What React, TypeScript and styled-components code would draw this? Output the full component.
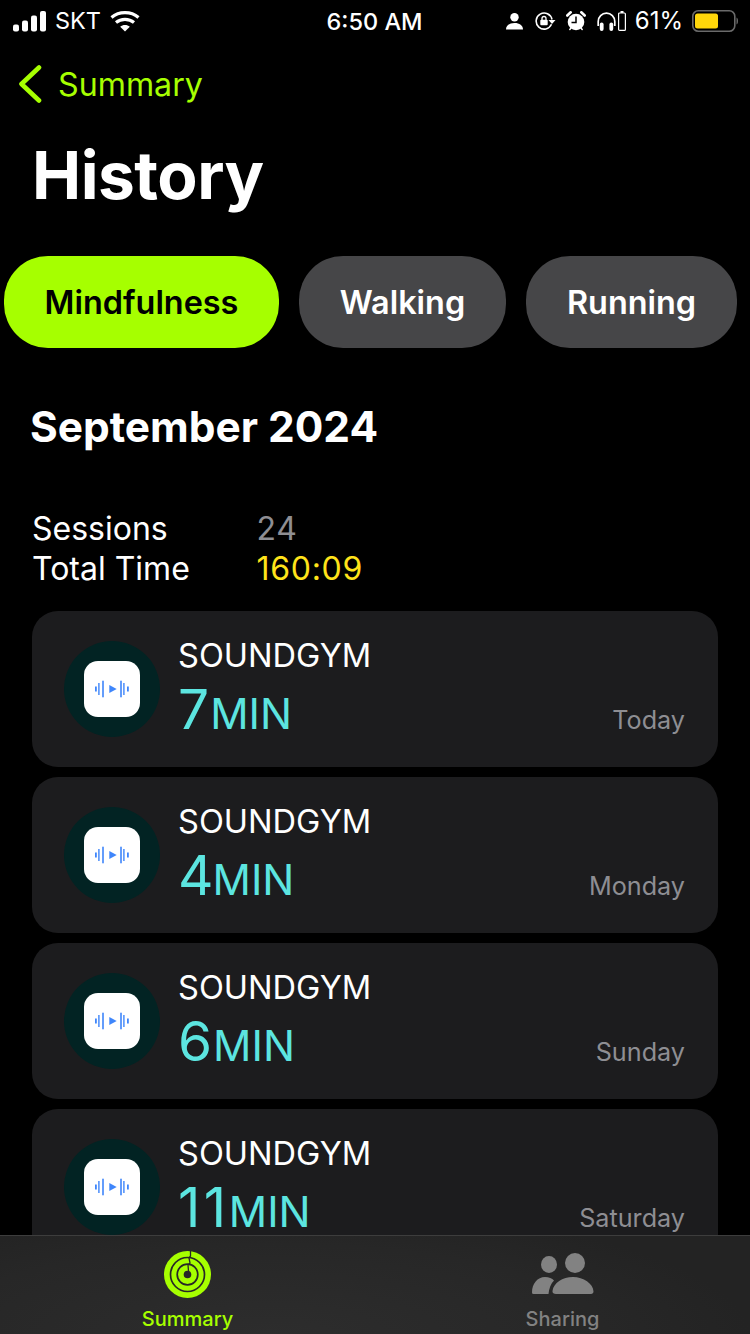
import styled, { createGlobalStyle } from 'styled-components';

const LIME = '#a6ff00';
const BAR_BG = '#272727';

type Session = {
  minutes: number;
  day: string;
  spacing: number;
};

// digit widths differ a little from the installed font, so spacing is per row
const sessions: Session[] = [
  { minutes: 7, day: 'Today', spacing: 2 },
  { minutes: 4, day: 'Monday', spacing: 0 },
  { minutes: 6, day: 'Sunday', spacing: 2 },
  { minutes: 11, day: 'Saturday', spacing: 3.5 },
];

const GlobalStyle = createGlobalStyle`
  html, body {
    margin: 0;
    padding: 0;
    background: #000;
  }
  body {
    font-family: Inter, "Liberation Sans", sans-serif;
  }
`;

const Screen = styled.div`
  position: relative;
  width: 750px;
  height: 1334px;
  overflow: hidden;
  background: #000;
  color: #fff;
`;

const StatusBar = styled.div`
  height: 40px;
  box-sizing: border-box;
  padding: 1px 12px 0 13px;
  display: grid;
  grid-template-columns: 1fr auto 1fr;
  align-items: center;
  font-size: 23.5px;
  line-height: 38px;
`;

const StatusLeft = styled.div`
  display: flex;
  align-items: center;
  gap: 8px;
`;

const StatusRight = styled.div`
  display: flex;
  align-items: center;
  justify-content: flex-end;
`;

const StatusItem = styled.span<{ $gap: number }>`
  display: flex;
  margin-left: ${({ $gap }) => $gap}px;
`;

const Percent = styled.span`
  margin-left: 9px;
  font-size: 24px;
`;

const Clock = styled.span`
  font-weight: 500;
  padding: 2px 2px 0 0;
`;

const BackLink = styled.div`
  display: flex;
  align-items: center;
  gap: 16px;
  height: 40px;
  margin-top: 24px;
  padding-left: 18px;
  color: ${LIME};
  font-size: 32.2px;
`;

const Title = styled.h1`
  margin: 32px 0 0 32px;
  font-size: 65.8px;
  line-height: 78px;
  font-weight: 700;
  letter-spacing: -0.5px;
`;

const Filters = styled.div`
  display: flex;
  gap: 20px;
  margin-top: 42px;
  padding-left: 4px;
`;

const Filter = styled.div<{ $active?: boolean; $width: number }>`
  width: ${({ $width }) => $width}px;
  height: 92px;
  border-radius: 44px;
  display: flex;
  align-items: center;
  justify-content: center;
  font-size: 32.4px;
  font-weight: 600;
  background: ${({ $active }) => ($active ? LIME : '#464648')};
  color: ${({ $active }) => ($active ? '#000' : '#fff')};
`;

const Month = styled.h2`
  margin: 54px 0 0 30px;
  font-size: 42.4px;
  line-height: 50px;
  font-weight: 700;
`;

const Stats = styled.dl`
  display: grid;
  grid-template-columns: 224px auto;
  justify-content: start;
  margin: 57px 0 0 33px;
  font-size: 32px;
  line-height: 40px;
`;

const StatLabel = styled.dt`
  margin: 0 0 0 -1px;
`;

const StatValue = styled.dd<{ $color: string }>`
  margin: 0 0 0 -0.5px;
  color: ${({ $color }) => $color};
  letter-spacing: 0.7px;
`;

const List = styled.div`
  display: flex;
  flex-direction: column;
  gap: 10px;
  margin: 22px 32px 0;
`;

const Card = styled.div`
  height: 156px;
  flex: none;
  box-sizing: border-box;
  padding: 0 33px 0 32px;
  display: flex;
  align-items: center;
  border-radius: 26px;
  background: #1c1c1e;
`;

const Badge = styled.div`
  width: 96px;
  height: 96px;
  flex: none;
  border-radius: 50%;
  background: #022323;
  display: flex;
  align-items: center;
  justify-content: center;
`;

const AppIcon = styled.div`
  width: 56px;
  height: 56px;
  border-radius: 14px;
  background: #fff;
  display: flex;
  align-items: center;
  justify-content: center;
`;

const CardBody = styled.div`
  flex: 1;
  margin-left: 18px;
  align-self: stretch;
  display: flex;
  flex-direction: column;
`;

const AppName = styled.div`
  margin-top: 24px;
  font-size: 32.6px;
  line-height: 40px;
`;

const Duration = styled.div`
  margin-top: 1px;
  color: #5ce5e0;
  font-size: 55px;
  line-height: 66px;
`;

const Digits = styled.span<{ $spacing: number }>`
  letter-spacing: ${({ $spacing }) => $spacing}px;
`;

const Unit = styled.span`
  margin-left: -1px;
  font-size: 42.5px;
`;

const Day = styled.div`
  align-self: flex-end;
  margin-bottom: 31px;
  color: #8e8e93;
  font-size: 25.2px;
  line-height: 32px;
`;

const TabBar = styled.nav`
  position: absolute;
  left: 0;
  right: 0;
  bottom: 0;
  height: 99px;
  box-sizing: border-box;
  display: grid;
  grid-template-columns: 375px 375px;
  border-top: 1px solid #3d3d3d;
  background: radial-gradient(ellipse 480px 130px at 270px 99px, #2d2d2d, ${BAR_BG} 70%, #232323);
`;

const TabItem = styled.div<{ $active?: boolean }>`
  display: flex;
  flex-direction: column;
  align-items: center;
  padding-top: 14px;
  color: ${({ $active }) => ($active ? LIME : '#828282')};
  font-size: 20px;
  font-weight: 500;
  line-height: 24px;
`;

const TabIcon = styled.div`
  height: 49px;
  margin-bottom: 8px;
  display: flex;
  align-items: center;
`;

const SignalIcon = () => (
  <svg width="34" height="21" viewBox="0 0 34 21" fill="#fff">
    <rect x="0" y="13.500" width="6" height="7" rx="2" />
    <rect x="9" y="9.500" width="6" height="11" rx="2" />
    <rect x="18" y="4.500" width="6" height="16" rx="2" />
    <rect x="27" y="0" width="6" height="20.500" rx="2" />
  </svg>
);

const WifiIcon = () => (
  <svg width="30" height="22" viewBox="0 0 30 22" fill="none" stroke="#fff" strokeWidth="3.200">
    <path d="M1.500 7.500C9 1 21 1 28.500 7.500" />
    <path d="M6 12.500C11 8.300 19 8.300 24 12.500" />
    <path d="M15 21.500l-4.800-4.800c2.700-2.200 6.900-2.200 9.600 0z" fill="#fff" stroke="none" />
  </svg>
);

const PersonIcon = () => (
  <svg width="17" height="17" viewBox="0 0 17 17" fill="#fff">
    <circle cx="8.500" cy="4.300" r="4.200" />
    <path d="M0 16.500c0-4 3.500-6.500 8.500-6.500s8.500 2.500 8.500 6.500z" />
  </svg>
);

const RotationLockIcon = () => (
  <svg width="22" height="18" viewBox="0 0 22 18" fill="none">
    <path d="M16.500 12.300A8 8 0 1 1 17 7.500" stroke="#fff" strokeWidth="1.600" />
    <path d="M13.500 8h7l-3.500 4z" fill="#fff" />
    <rect x="5.300" y="7.700" width="7.400" height="5.600" rx="1" fill="#fff" />
    <path d="M7 8V6.500a2 2 0 0 1 4 0V8" stroke="#fff" strokeWidth="1.300" />
  </svg>
);

const AlarmIcon = () => (
  <svg width="20" height="20" viewBox="0 0 20 20">
    <circle cx="10" cy="11" r="8.300" fill="#fff" />
    <path d="M1.300 4.500L4.700 1.300M18.700 4.500L15.300 1.300" stroke="#fff" strokeWidth="2.600" strokeLinecap="round" />
    <path d="M3.800 18.500l1.500-1.800M16.200 18.500l-1.500-1.800" stroke="#fff" strokeWidth="1.500" strokeLinecap="round" />
    <path d="M10 5.500v6H5.500" stroke="#000" strokeWidth="1.500" fill="none" />
  </svg>
);

const HeadphonesIcon = () => (
  <svg width="19" height="19" viewBox="0 0 19 19" fill="none">
    <path d="M1.200 14V9.500a8.300 8.300 0 0 1 16.600 0V14" stroke="#fff" strokeWidth="1.700" />
    <rect x="2.800" y="10.500" width="3.800" height="8.500" rx="1.900" fill="#fff" />
    <rect x="12.400" y="10.500" width="3.800" height="8.500" rx="1.900" fill="#fff" />
  </svg>
);

const TinyBatteryIcon = () => (
  <svg width="8" height="20" viewBox="0 0 8 20">
    <rect x="2.500" y="0" width="3" height="2" fill="#fff" />
    <rect x="0.600" y="2" width="6.800" height="17.400" rx="1" fill="none" stroke="#fff" strokeWidth="1.200" />
  </svg>
);

const BatteryIcon = () => (
  <svg width="46" height="22" viewBox="0 0 46 22">
    <rect x="0.800" y="0.800" width="42" height="20.400" rx="5.500" fill="none" stroke="#6a6a6a" strokeWidth="1.600" />
    <rect x="3" y="3.500" width="23" height="15" rx="2.500" fill="#ffd60a" />
    <path d="M44.500 7.500c1 .4 1.500 1.800 1.500 3.500s-.5 3.100-1.500 3.500z" fill="#6a6a6a" />
  </svg>
);

const ChevronIcon = () => (
  <svg width="24" height="38" viewBox="0 0 24 38" fill="none">
    <path d="M21 2.500L3.500 19 21 35.500" stroke={LIME} strokeWidth="4.600" strokeLinecap="round" strokeLinejoin="round" />
  </svg>
);

const SoundIcon = () => (
  <svg width="34" height="18" viewBox="0 0 34 18" fill="#3f86fb">
    <rect x="0" y="6.500" width="1.800" height="5" />
    <rect x="3.200" y="3" width="1.400" height="12" />
    <rect x="7.200" y="0.700" width="1.600" height="16.600" />
    <path d="M14.300 5l7.400 4-7.400 4z" />
    <rect x="25.200" y="0.700" width="1.600" height="16.600" />
    <rect x="28.200" y="3" width="1.400" height="12" />
    <rect x="32" y="6.500" width="1.800" height="5" />
  </svg>
);

const RingsIcon = () => (
  <svg width="47" height="47" viewBox="0 0 47 47" fill="none">
    <circle cx="23.500" cy="23.500" r="23.500" fill={LIME} />
    <circle cx="23.500" cy="23.500" r="17" stroke={BAR_BG} strokeWidth="1.700" />
    <circle cx="23.500" cy="23.500" r="10.300" stroke={BAR_BG} strokeWidth="1.700" />
    <circle cx="23.500" cy="23.500" r="3.800" fill={BAR_BG} />
    <path d="M26.500 0v5l-1.500 2 1 5-2 2 .5 6" stroke={BAR_BG} strokeWidth="1.300" />
  </svg>
);

const PeopleIcon = () => (
  <svg width="62" height="43" viewBox="0 0 62 43" fill="#828282">
    <ellipse cx="17" cy="11.500" rx="8" ry="8.500" />
    <ellipse cx="43" cy="10" rx="10" ry="10" />
    <path d="M0 39.500c0-9 5.500-15.500 13-15.500 4 0 7 1.500 9 3.500-3 3-5 8-5.500 13.500H1.500A1.500 1.500 0 0 1 0 39.500z" />
    <path d="M24 41c-2 0-4-1-3.500-3 1-8 10-14 20.500-14s20 6.500 20.500 14.500c0 1.500-1 2.500-2.500 2.500z" />
  </svg>
);

const App = () => {
  return (
    <Screen>
      <GlobalStyle />
      <StatusBar>
        <StatusLeft>
          <SignalIcon />
          <span>SKT</span>
          <StatusItem $gap={1}><WifiIcon /></StatusItem>
        </StatusLeft>
        <Clock>6:50 AM</Clock>
        <StatusRight>
          <StatusItem $gap={0}><PersonIcon /></StatusItem>
          <StatusItem $gap={12}><RotationLockIcon /></StatusItem>
          <StatusItem $gap={9}><AlarmIcon /></StatusItem>
          <StatusItem $gap={11}><HeadphonesIcon /></StatusItem>
          <StatusItem $gap={2}><TinyBatteryIcon /></StatusItem>
          <Percent>61%</Percent>
          <StatusItem $gap={9}><BatteryIcon /></StatusItem>
        </StatusRight>
      </StatusBar>

      <BackLink>
        <ChevronIcon />
        <span>Summary</span>
      </BackLink>
      <Title>History</Title>

      <Filters>
        <Filter $active $width={275}>Mindfulness</Filter>
        <Filter $width={207}>Walking</Filter>
        <Filter $width={211}>Running</Filter>
      </Filters>

      <Month>September 2024</Month>

      <Stats>
        <StatLabel>Sessions</StatLabel>
        <StatValue $color="#8e8e93">24</StatValue>
        <StatLabel>Total Time</StatLabel>
        <StatValue $color="#ffe31a">160:09</StatValue>
      </Stats>

      <List>
        {sessions.map((session) => (
          <Card key={session.day}>
            <Badge>
              <AppIcon>
                <SoundIcon />
              </AppIcon>
            </Badge>
            <CardBody>
              <AppName>SOUNDGYM</AppName>
              <Duration>
                <Digits $spacing={session.spacing}>{session.minutes}</Digits>
                <Unit>MIN</Unit>
              </Duration>
            </CardBody>
            <Day>{session.day}</Day>
          </Card>
        ))}
      </List>

      <TabBar>
        <TabItem $active>
          <TabIcon>
            <RingsIcon />
          </TabIcon>
          Summary
        </TabItem>
        <TabItem>
          <TabIcon>
            <PeopleIcon />
          </TabIcon>
          Sharing
        </TabItem>
      </TabBar>
    </Screen>
  );
};

export default App;
